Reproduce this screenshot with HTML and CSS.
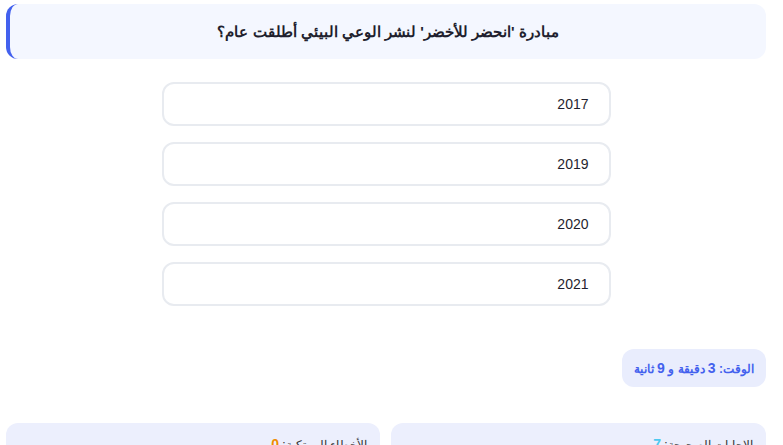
FILE: index.html
```html
<!DOCTYPE html>
<html lang="ar" dir="rtl">
<head>
<meta charset="utf-8">
<link rel="stylesheet" href="styles.css">
</head>
<body>
<div class="page">
  <div class="question">مبادرة 'انحضر للأخضر' لنشر الوعي البيئي أطلقت عام؟</div>
  <div class="options">
    <div class="option">2017</div>
    <div class="option">2019</div>
    <div class="option">2020</div>
    <div class="option">2021</div>
  </div>
  <div class="timer"><span>الوقت: <b>3</b> دقيقة و <b>9</b> ثانية</span></div>
  <div class="stats">
    <div class="stat">الإجابات الصحيحة: <span class="ok">7</span></div>
    <div class="stat">الأخطاء المرتكبة: <span class="bad">0</span></div>
  </div>
</div>
</body>
</html>
```
FILE: styles.css
```css
html, body { margin: 0; padding: 0; background: #fff; }
body { font-family: "Liberation Sans", Arial, sans-serif; color: #222; }
.page {
  padding: 4px 17px 0 6px;
  display: flex;
  flex-direction: column;
}
.question {
  height: 55px;
  box-sizing: border-box;
  background: #f4f7ff;
  border-left: 4px solid #4361ee;
  border-radius: 12px;
  display: flex;
  align-items: center;
  justify-content: center;
  font-weight: bold;
  font-size: 15px;
  color: #1f1f2e;
}
.options {
  margin: 23px auto 0;
  width: 449px;
  display: flex;
  flex-direction: column;
  gap: 16px;
}
.option {
  height: 44px;
  box-sizing: border-box;
  border: 2px solid #e8ebf0;
  border-radius: 12px;
  display: flex;
  align-items: center;
  padding-right: 20px;
  font-size: 14px;
  color: #1f1f2e;
}
.timer {
  margin-top: 43px;
  align-self: flex-start;
  height: 38px;
  box-sizing: border-box;
  padding: 0 12px;
  display: flex;
  align-items: center;
  background: #e9edfd;
  border-radius: 12px;
  color: #4361ee;
  font-weight: bold;
  font-size: 12px;
}
.timer b { font-size: 14px; }
.stats {
  margin-top: 36px;
  display: grid;
  grid-template-columns: 375px 374px;
  gap: 11px;
}
.stat {
  background: #eceffd;
  border-radius: 12px;
  height: 60px;
  padding: 13px 13px 0;
  font-size: 12px;
  color: #333;
}
.ok { color: #4cc9f0; font-weight: bold; font-size: 14px; }
.bad { color: #f08c00; font-weight: bold; font-size: 14px; }
```
